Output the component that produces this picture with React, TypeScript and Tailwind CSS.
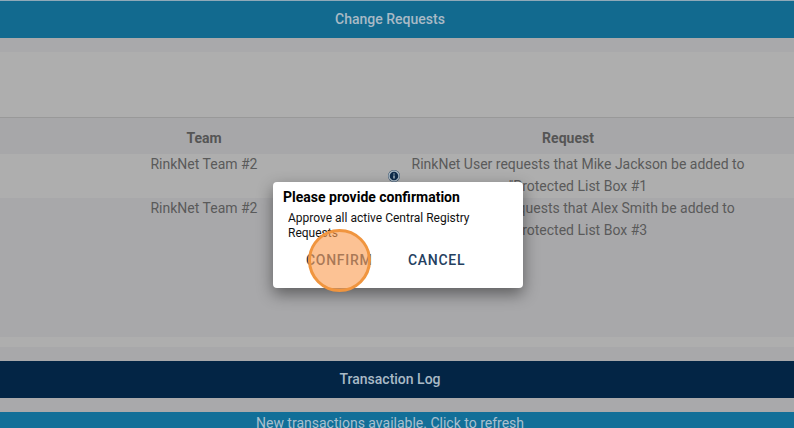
import { Info } from "lucide-react";

const rows = [
  { team: "RinkNet Team #2", who: "Mike Jackson", box: "#1", bg: "bg-[#aeaeae]", h: "h-[44px]" },
  { team: "RinkNet Team #2", who: "Alex Smith", box: "#3", bg: "bg-[#a8a8aa]", h: "h-[139px]" },
];

const Bar = ({ className, label }: { className: string; label: string }) => (
  <div className={`flex items-center justify-center pr-[14px] text-[14px] font-medium text-[#a9bac6] ${className}`}>{label}</div>
);

const ConfirmDialog = () => (
  <div className="absolute left-[273px] top-[182px] h-[106px] w-[250px] rounded-[4px] bg-white shadow-[0_6px_16px_rgba(0,0,0,0.45)]">
    <div className="pl-[10px] pt-[6px] text-[14px] leading-[19px] font-bold text-black">Please provide confirmation</div>
    <div className="pl-[15px] pr-[20px] pt-[4px] text-[12px] leading-[15px] text-[#111]">
      Approve all active Central Registry Requests
    </div>
    <div className="flex pl-[33px] pt-[9px] text-[14px] leading-[20px] font-medium tracking-[0.7px] text-[#24405f]">
      <span className="w-[102px]">CONFIRM</span>
      <span>CANCEL</span>
    </div>
    <div className="absolute left-[35px] top-[47px] h-[63px] w-[63px] rounded-full border-[3px] border-[#f0953f] bg-[#fa9c52]/[0.62]" />
  </div>
);

export default function App() {
  return (
    <div className="relative h-[428px] w-[794px] overflow-hidden bg-[#a9a9ab] font-['Roboto',sans-serif]">
      <div className="h-px bg-[#8fa9b8]" />
      <Bar className="h-[37px] bg-[#126a8f]" label="Change Requests" />
      <div className="h-[14px] bg-[#a9a9ab]" />
      <div className="h-[66px] border-b border-[#999] bg-[#aeaeae]" />
      <div className="grid h-[36px] grid-cols-[66px_276px_1fr] items-center bg-[#a7a7a9] pt-[4px] text-[14px] font-bold text-[#555]">
        <span />
        <span className="text-center">Team</span>
        <span className="text-center">Request</span>
      </div>
      {rows.map((r) => (
        <div key={r.box} className={`grid grid-cols-[66px_276px_1fr] text-[14px] leading-[22px] text-[#5a5a5a] ${r.bg} ${r.h}`}>
          <span />
          <span className="-mt-px text-center">{r.team}</span>
          <span className="-mt-px pl-[20px] text-center">
            RinkNet User requests that {r.who} be added to
            <br />
            "Protected List Box {r.box}
          </span>
        </div>
      ))}
      <div className="h-[10px] bg-[#aeaeae]" />
      <div className="h-[14px] bg-[#a8a8aa]" />
      <Bar className="h-[37px] bg-[#032545]" label="Transaction Log" />
      <div className="h-[14px] bg-[#a9a9ab]" />
      <div className="h-[16px] bg-[#126f98] pr-[14px] text-center text-[14px] leading-[22px] text-[#a9c0cf]">
        New transactions available. Click to refresh
      </div>
      <div className="absolute left-[388px] top-[170px] flex h-[12px] w-[12px] items-center justify-center rounded-full bg-[#0e2c4c] text-[#a9b8c4]">
        <Info size={12} strokeWidth={3} />
      </div>
      <ConfirmDialog />
    </div>
  );
}
